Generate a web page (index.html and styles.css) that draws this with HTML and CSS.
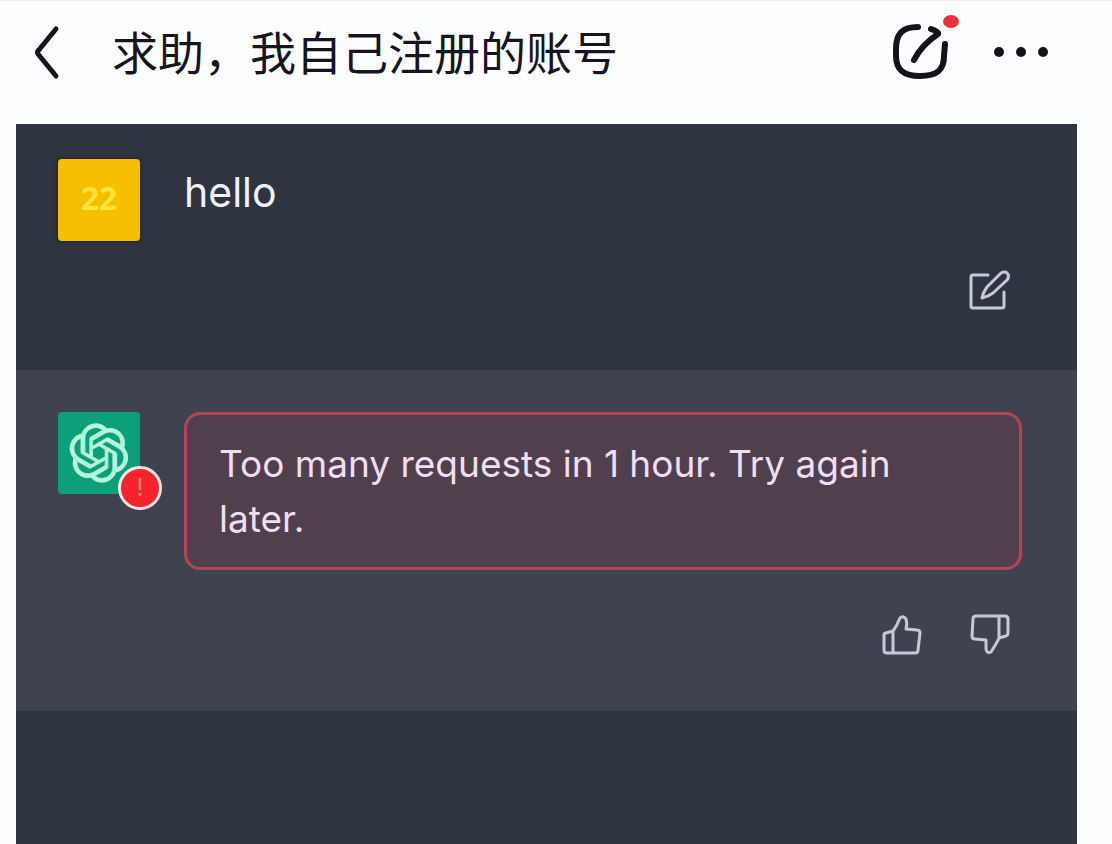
FILE: index.html
```html
<!DOCTYPE html>
<html lang="zh-CN">
<head>
  <meta charset="UTF-8" />
  <meta name="viewport" content="width=device-width, initial-scale=1" />
  <title>求助，我自己注册的账号</title>
  <link rel="stylesheet" href="styles.css">
</head>
<body>

  <header class="topbar">
    <button class="icon-btn" type="button" aria-label="返回">
      <svg width="32" height="56" viewBox="0 0 32 56" fill="none" stroke="#17131a" stroke-width="5" stroke-linecap="round" stroke-linejoin="round">
        <path d="M24 5 L6 27 Q5 28 6 30 L24 52" />
      </svg>
    </button>
    <h1 class="title">求助，我自己注册的账号</h1>
    <button class="icon-btn share-btn" type="button" aria-label="分享">
      <svg width="60" height="60" viewBox="0 0 60 60" fill="none" stroke="#14131c" stroke-width="6" stroke-linecap="round" stroke-linejoin="round">
        <path d="M27 5 C11 5 5 12 5 27 V34 C5 48 13 54 29 54 C46 54 53 48 53 34 L54 22" />
        <path d="M23 38 C28 28 35 20 47 12 Q48 10 40 7" />
      </svg>
      <span class="dot"></span>
    </button>
    <button class="icon-btn" type="button" aria-label="更多">
      <svg width="56" height="12" viewBox="0 0 56 12" fill="#14131c">
        <circle cx="6" cy="6" r="5" />
        <circle cx="28" cy="6" r="5" />
        <circle cx="50" cy="6" r="5" />
      </svg>
    </button>
  </header>

  <main class="chat">
    <!-- user message -->
    <section class="message">
      <div class="row">
        <div class="avatar avatar-user">22</div>
        <p class="text">hello</p>
      </div>
      <div class="actions">
        <button class="icon-btn" type="button" aria-label="Edit">
          <svg width="44" height="44" viewBox="0 0 44 44" fill="none" stroke="#c5c9da" stroke-width="3" stroke-linecap="round" stroke-linejoin="round">
            <path d="M20 7 H5 Q3 7 3 9 V38 Q3 40 5 40 H34 Q36 40 36 38 V24" />
            <path d="M14 30 C15 25 16 23 19 19 L33 5 Q37 3 39 5 Q42 8 39 12 L25 25 C21 28 18 29 14 30 Z" />
          </svg>
        </button>
      </div>
    </section>

    <!-- assistant message -->
    <section class="message message-bot">
      <div class="row">
        <div class="avatar avatar-bot">
          <svg width="60" height="60" viewBox="0 0 41 41" fill="#b4f8dc" stroke="#b4f8dc" stroke-width="0.6">
            <path d="M37.532 16.87a9.963 9.963 0 0 0-.856-8.184 10.078 10.078 0 0 0-10.855-4.835A9.964 9.964 0 0 0 18.306.5a10.079 10.079 0 0 0-9.614 6.977 9.967 9.967 0 0 0-6.664 4.834 10.08 10.08 0 0 0 1.24 11.817 9.965 9.965 0 0 0 .856 8.185 10.079 10.079 0 0 0 10.855 4.835 9.965 9.965 0 0 0 7.516 3.35 10.078 10.078 0 0 0 9.617-6.981 9.967 9.967 0 0 0 6.663-4.834 10.079 10.079 0 0 0-1.243-11.813ZM22.498 37.886a7.474 7.474 0 0 1-4.799-1.735c.061-.033.168-.091.237-.134l7.964-4.6a1.294 1.294 0 0 0 .655-1.134V19.054l3.366 1.944a.12.12 0 0 1 .066.092v9.299a7.505 7.505 0 0 1-7.49 7.496ZM6.392 31.006a7.471 7.471 0 0 1-.894-5.023c.06.036.162.099.237.141l7.964 4.6a1.297 1.297 0 0 0 1.308 0l9.724-5.614v3.888a.12.12 0 0 1-.048.103l-8.051 4.649a7.504 7.504 0 0 1-10.24-2.744ZM4.297 13.62A7.469 7.469 0 0 1 8.2 10.333c0 .068-.004.19-.004.274v9.201a1.294 1.294 0 0 0 .654 1.132l9.723 5.614-3.366 1.944a.12.12 0 0 1-.114.01L7.04 23.856a7.504 7.504 0 0 1-2.743-10.237Zm27.658 6.437-9.724-5.615 3.367-1.943a.121.121 0 0 1 .113-.01l8.052 4.648a7.498 7.498 0 0 1-1.158 13.528v-9.476a1.293 1.293 0 0 0-.65-1.132Zm3.35-5.043c-.059-.037-.162-.099-.236-.141l-7.965-4.6a1.298 1.298 0 0 0-1.308 0l-9.723 5.614v-3.888a.12.12 0 0 1 .048-.103l8.05-4.645a7.497 7.497 0 0 1 11.135 7.763Zm-21.063 6.929-3.367-1.944a.12.12 0 0 1-.065-.092v-9.299a7.497 7.497 0 0 1 12.293-5.756 6.94 6.94 0 0 0-.236.134l-7.965 4.6a1.294 1.294 0 0 0-.654 1.132l-.006 11.225Zm1.829-3.943 4.33-2.501 4.332 2.5v5l-4.331 2.5-4.331-2.5V18Z" />
          </svg>
          <span class="badge">!</span>
        </div>
        <p class="error">Too many requests in 1 hour. Try again later.</p>
      </div>
      <div class="actions">
        <button class="icon-btn" type="button" aria-label="Good response">
          <svg width="44" height="44" viewBox="0 0 44 44" fill="none" stroke="#c5c9da" stroke-width="3" stroke-linecap="round" stroke-linejoin="round">
            <path d="M13 18 L6 20 Q4 20 4 22 V37 Q4 40 7 40 H35 Q38 40 38 37 L40 20 Q40 17 37 17 L26 16 C27 12 27 9 26 6 Q23 2 20 5 C18 10 16 14 13 18 V40" />
          </svg>
        </button>
        <button class="icon-btn" type="button" aria-label="Bad response">
          <svg width="44" height="44" viewBox="0 0 44 44" fill="none" stroke="#c5c9da" stroke-width="3" stroke-linecap="round" stroke-linejoin="round">
            <path d="M31 25 L38 23 Q40 22 40 20 V6 Q40 3 37 3 H8 Q5 3 5 6 L4 23 Q4 26 7 26 L18 27 V36 Q19 41 23 39 C26 34 29 30 31 25 V3" />
          </svg>
        </button>
      </div>
    </section>
  </main>

</body>
</html>
```

FILE: styles.css
```css
* {
  box-sizing: border-box;
}
body {
  display: flex;
  flex-direction: column;
  min-height: 100vh;
  margin: 0;
  background-color: #fdfeff;
  font-family: Inter, "Noto Sans CJK SC", sans-serif;
}
.icon-btn {
  display: block;
  padding: 0;
  border: none;
  background: none;
  cursor: pointer;
}
.icon-btn svg {
  display: block;
}

/* top bar */
.topbar {
  display: flex;
  align-items: center;
  height: 124px;
  padding: 0 63px 22px 32px;
  border-top: 1px solid #eceef2;
}
.title {
  flex: 1;
  margin: 0 0 4px 48px;
  font-family: "Noto Sans CJK SC", sans-serif;
  font-size: 46px;
  font-weight: 400;
  line-height: 64px;
  color: #17131f;
}
.share-btn {
  position: relative;
  margin-right: 42px;
}
.dot {
  position: absolute;
  top: -7px;
  right: -8px;
  width: 16px;
  height: 13px;
  border-radius: 50%;
  background-color: #ee2f38;
}

/* conversation */
.chat {
  flex: 1;
  margin: 0 35px 0 16px;
  background-color: #2f3441;
}
.message {
  padding: 35px 55px 58px 42px;
}
.message-bot {
  padding-top: 42px;
  padding-bottom: 54px;
  background-color: #3f4350;
}
.row {
  display: flex;
  align-items: flex-start;
  gap: 44px;
}
.avatar {
  position: relative;
  display: flex;
  flex: none;
  align-items: center;
  justify-content: center;
  width: 82px;
  height: 82px;
  border-radius: 4px;
}
.avatar-user {
  background-color: #f6bf02;
  box-shadow: 0 0 4px #1d1b1a;
  color: #ffe43c;
  font-family: "Open Sans", sans-serif;
  font-size: 32px;
  font-weight: 700;
  line-height: 40px;
  padding-bottom: 4px;
}
.avatar-bot {
  background-color: #0d9f7a;
}
.badge {
  position: absolute;
  right: -22px;
  bottom: -16px;
  width: 44px;
  height: 44px;
  border: 3px solid #ffe5e5;
  border-radius: 50%;
  background-color: #f5232b;
  color: #ff8587;
  font-size: 24px;
  line-height: 38px;
  text-align: center;
}
.text {
  margin: 6px 0 0;
  color: #eef0fa;
  font-size: 41px;
  line-height: 55px;
}
.error {
  flex: 1;
  margin: 0;
  padding: 21px 48px 21px 32px;
  border: 3px solid #b54457;
  border-radius: 16px;
  background-color: #50404e;
  color: #f0def2;
  font-size: 37px;
  line-height: 55px;
}
.actions {
  display: flex;
  justify-content: flex-end;
  gap: 44px;
  margin-top: 27px;
  padding-right: 10px;
}
.message-bot .actions {
  margin-top: 43px;
}
```
